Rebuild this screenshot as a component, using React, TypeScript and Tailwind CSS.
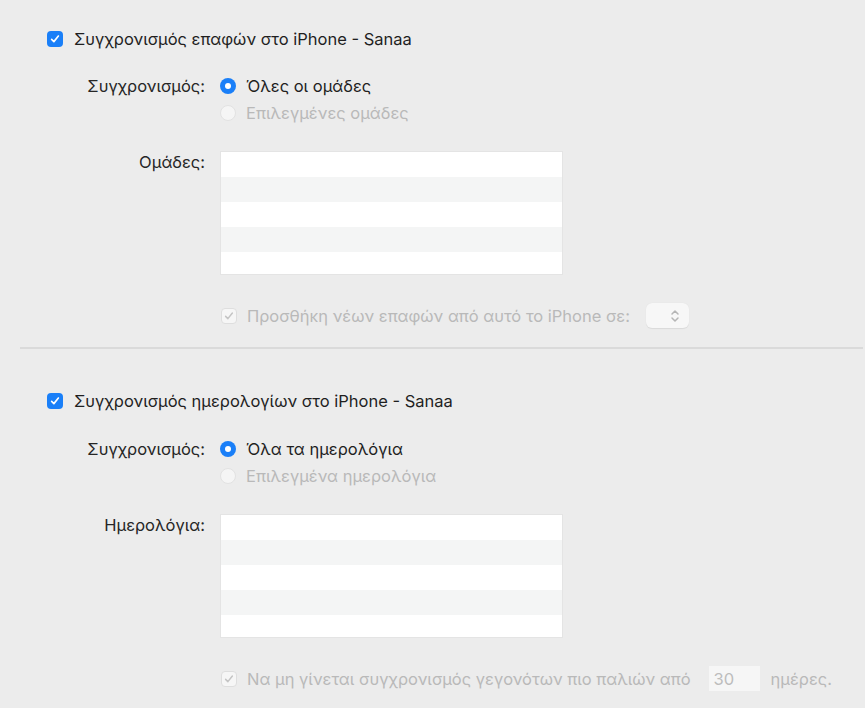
import React from "react";

const font = { fontFamily: "Inter, 'Noto Sans', sans-serif" };

function CheckBox({ disabled }: { disabled?: boolean }) {
    if (disabled) {
        return (
            <span className="flex h-[16px] w-[16px] shrink-0 items-center justify-center rounded-[4px] border border-[#dedede] bg-[#f6f6f6]">
                <svg viewBox="0 0 16 16" className="h-[12px] w-[12px]">
                    <path d="M3.5 8.5 L6.5 11.5 L12.5 4" fill="none" stroke="#c4c4c4" strokeWidth="2" strokeLinecap="round" strokeLinejoin="round" />
                </svg>
            </span>
        );
    }
    return (
        <span className="flex h-[16px] w-[16px] shrink-0 items-center justify-center rounded-[4px] bg-[#1a7ff8]">
            <svg viewBox="0 0 16 16" className="h-[12px] w-[12px]">
                <path d="M3.5 8.5 L6.5 11.5 L12.5 4" fill="none" stroke="#fff" strokeWidth="2.2" strokeLinecap="round" strokeLinejoin="round" />
            </svg>
        </span>
    );
}

function Radio({ on }: { on?: boolean }) {
    if (on) {
        return (
            <span className="flex h-[16px] w-[16px] shrink-0 items-center justify-center rounded-full bg-[#1a7ff8]">
                <span className="h-[6px] w-[6px] rounded-full bg-white" />
            </span>
        );
    }
    return <span className="h-[16px] w-[16px] shrink-0 rounded-full border border-[#e2e2e2] bg-[#f5f5f5]" />;
}

function List() {
    return (
        <div className="flex w-[343px] flex-col border border-[#e4e4e4] bg-white">
            <div className="h-[25px] bg-white" />
            <div className="h-[25px] bg-[#f4f5f5]" />
            <div className="h-[25px] bg-white" />
            <div className="h-[25px] bg-[#f4f5f5]" />
            <div className="h-[22px] bg-white" />
        </div>
    );
}

function Label({ children }: { children: React.ReactNode }) {
    return <div className="w-[206px] shrink-0 pr-[1px] text-right text-[#262626]">{children}</div>;
}

function Section({
    title,
    all,
    selected,
    listLabel,
    footer,
    first,
}: {
    title: string;
    all: string;
    selected: string;
    listLabel: string;
    footer: React.ReactNode;
    first?: boolean;
}) {
    return (
        <div className="flex flex-col">
            <div className={`flex h-[22px] items-center gap-[11px] pl-[47px] ${first ? "mt-[28px]" : "mt-[41px]"}`}>
                <CheckBox />
                <span className="text-[#1f1f1f]">{title}</span>
            </div>
            <div className={`flex ${first ? "mt-[25px]" : "mt-[26px]"}`}>
                <Label>Συγχρονισμός:</Label>
                <div className="ml-[14px] flex flex-col gap-[5px]">
                    <div className="flex h-[22px] items-center gap-[10px]">
                        <Radio on />
                        <span className="text-[#1f1f1f]">{all}</span>
                    </div>
                    <div className="flex h-[22px] items-center gap-[10px]">
                        <Radio />
                        <span className="text-[#b9b9b9]">{selected}</span>
                    </div>
                </div>
            </div>
            <div className="mt-[27px] flex">
                <div className="flex h-[22px] w-[206px] shrink-0 items-center justify-end pr-[1px] text-[#262626]">
                    {listLabel}
                </div>
                <div className="ml-[14px]">
                    <List />
                </div>
            </div>
            <div className="mt-[28px] flex h-[25px] items-center pl-[221px]">{footer}</div>
        </div>
    );
}

export default function App() {
    return (
        <div className="h-[708px] w-[865px] overflow-hidden bg-[#ececec] text-[16.5px] leading-[22px]" style={font}>
            <Section
                first
                title="Συγχρονισμός επαφών στο iPhone - Sanaa"
                all="Όλες οι ομάδες"
                selected="Επιλεγμένες ομάδες"
                listLabel="Ομάδες:"
                footer={
                    <>
                        <CheckBox disabled />
                        <span className="ml-[10px] text-[#b9b9b9]">Προσθήκη νέων επαφών από αυτό το iPhone σε:</span>
                        <span className="ml-[16px] flex h-[25px] w-[43px] items-center justify-end rounded-[6px] bg-[#f7f7f7] pr-[9px] shadow-[0_0.5px_1px_rgba(0,0,0,0.08)]">
                            <svg viewBox="0 0 10 16" className="h-[16px] w-[10px]">
                                <path d="M2 6 L5 3 L8 6 M2 10 L5 13 L8 10" fill="none" stroke="#b5b5b5" strokeWidth="1.5" strokeLinecap="round" strokeLinejoin="round" />
                            </svg>
                        </span>
                    </>
                }
            />
            <div className="ml-[20px] mt-[19px] h-[2px] w-[843px] bg-[#dadada]" />
            <Section
                title="Συγχρονισμός ημερολογίων στο iPhone - Sanaa"
                all="Όλα τα ημερολόγια"
                selected="Επιλεγμένα ημερολόγια"
                listLabel="Ημερολόγια:"
                footer={
                    <>
                        <CheckBox disabled />
                        <span className="ml-[10px] text-[#b9b9b9]">Να μη γίνεται συγχρονισμός γεγονότων πιο παλιών από</span>
                        <span className="ml-[18px] flex h-[25px] w-[51px] items-center bg-[#f6f6f6] pl-[5px] text-[#bdbdbd]">30</span>
                        <span className="ml-[11px] text-[#b9b9b9]">ημέρες.</span>
                    </>
                }
            />
        </div>
    );
}
